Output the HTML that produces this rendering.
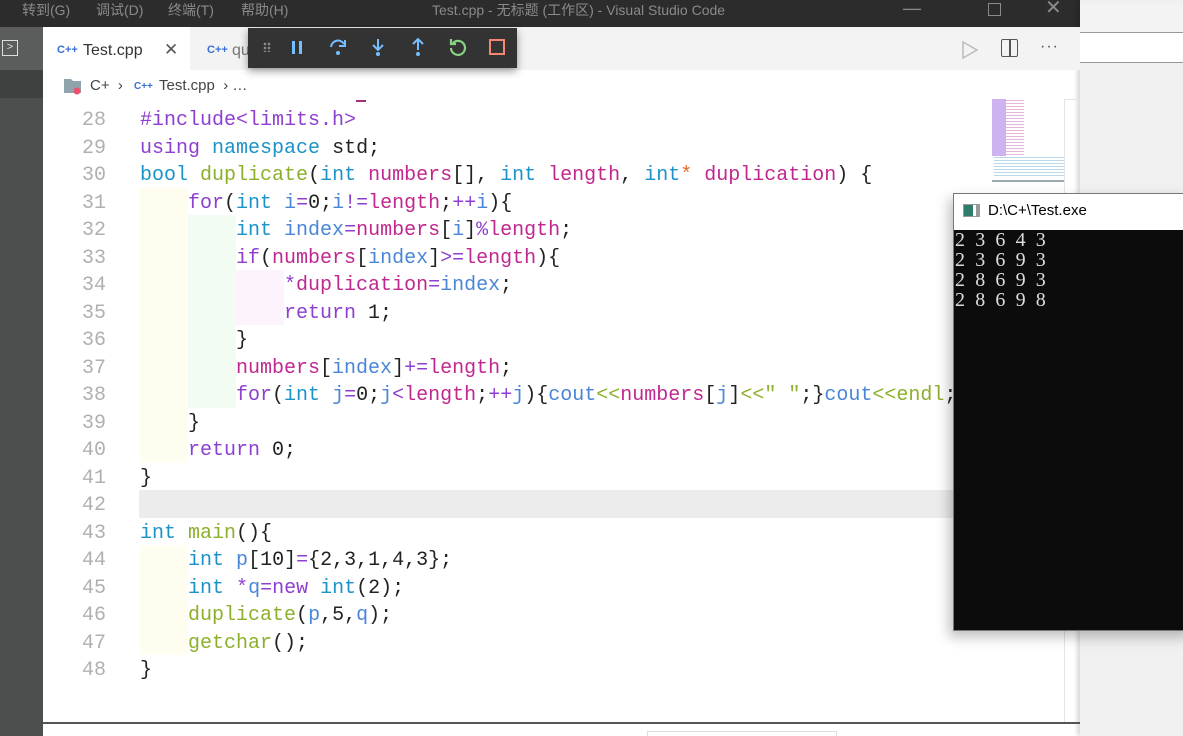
<!DOCTYPE html>
<html><head><meta charset="utf-8"><style>
*{margin:0;padding:0;box-sizing:border-box}
body{width:1183px;height:736px;overflow:hidden;position:relative;background:#fff;font-family:"Liberation Sans","Noto Sans CJK SC",sans-serif}
.abs{position:absolute}
.code{font-family:"Liberation Mono","DejaVu Sans Mono",monospace;font-size:20px;line-height:27.5px;white-space:pre}
.ln{color:#b0b0b0;text-align:right;width:64px;left:42px}
.p{color:#8d3fd0}.b{color:#1b93c8}.m{color:#c0278f}.g{color:#8cb02c}.k{color:#222}.o{color:#e26a2a}.lb{color:#4a86d8}
</style></head><body>
<div class="abs" style="left:0;top:0;width:1080px;height:27px;background:#2c2c2c"></div>
<div class="abs" style="left:0;top:0;width:1080px;height:27px;color:#8a8a8a;font-size:14px;line-height:20px">
<span class="abs" style="left:22px">转到(G)</span><span class="abs" style="left:96px">调试(D)</span><span class="abs" style="left:168px">终端(T)</span><span class="abs" style="left:241px">帮助(H)</span>
<span class="abs" style="left:432px">Test.cpp - 无标题 (工作区) - Visual Studio Code</span>
<span class="abs" style="left:903px;top:-2px;font-size:18px">—</span>
<span class="abs" style="left:988px;top:3px;width:13px;height:13px;border:1px solid #8a8a8a"></span>
<span class="abs" style="left:1045px;top:-2px;font-size:20px">✕</span>
</div>
<div class="abs" style="left:1080px;top:0;width:103px;height:736px;background:#f0f0f0;box-shadow:-3px 0 4px rgba(0,0,0,.15)"></div>
<div class="abs" style="left:1080px;top:4px;width:103px;height:28px;background:#f3f3f3"></div>
<div class="abs" style="left:1080px;top:32px;width:103px;height:31px;background:#fff;border-top:1px solid #999;border-bottom:1px solid #999"></div>
<div class="abs" style="left:0;top:27px;width:43px;height:709px;background:#4b4f4e"></div>
<div class="abs" style="left:0;top:27px;width:43px;height:43px;background:#5a5d5c"></div>
<div class="abs" style="left:2px;top:40px;width:16px;height:16px;border:1.5px solid #ddd;color:#ddd;font-size:11px;line-height:12px;text-align:center">&gt;</div>
<div class="abs" style="left:0;top:70px;width:43px;height:28px;background:#3d4140"></div>
<div class="abs" style="left:43px;top:27px;width:1037px;height:43px;background:#f3f3f3"></div>
<div class="abs" style="left:43px;top:27px;width:147px;height:43px;background:#fff"></div>
<div class="abs" style="left:57px;top:44px;font-size:11px;font-weight:bold;color:#3b6fd4">C++</div>
<div class="abs" style="left:83px;top:42px;font-size:16px;color:#333">Test.cpp</div>
<div class="abs" style="left:164px;top:40px;font-size:17px;color:#555">✕</div>
<div class="abs" style="left:207px;top:44px;font-size:11px;font-weight:bold;color:#3b6fd4">C++</div>
<div class="abs" style="left:232px;top:42px;font-size:16px;color:#777">qu</div>
<svg class="abs" style="left:960px;top:39px" width="20" height="22"><path d="M3 3 L17 11 L3 19Z" fill="none" stroke="#bbb" stroke-width="1.5"/></svg>
<div class="abs" style="left:1001px;top:39px;width:17px;height:18px;border:1.5px solid #555;border-radius:2px"></div>
<div class="abs" style="left:1009px;top:39px;width:1.5px;height:18px;background:#555"></div>
<div class="abs" style="left:1040px;top:38px;font-size:16px;color:#555;letter-spacing:1px">···</div>
<div class="abs" style="left:248px;top:28px;width:269px;height:40px;background:#333;box-shadow:0 3px 8px rgba(0,0,0,.4)"></div>
<div class="abs" style="left:263px;top:42px;width:8px;height:10px;background:radial-gradient(circle,#888 1.2px,transparent 1.5px) 0 0/4px 4px"></div>
<div class="abs" style="left:292px;top:41px;width:3px;height:13px;background:#75beff"></div>
<div class="abs" style="left:299px;top:41px;width:3px;height:13px;background:#75beff"></div>
<svg class="abs" style="left:327px;top:36px" width="22" height="22"><path d="M4 11 A7 7 0 0 1 17 8" fill="none" stroke="#75beff" stroke-width="2"/><path d="M18 4 L18 10 L12 10" fill="none" stroke="#75beff" stroke-width="2"/><circle cx="11" cy="17" r="2" fill="#75beff"/></svg>
<svg class="abs" style="left:367px;top:36px" width="22" height="22"><path d="M11 3 V13 M6 9 L11 14 L16 9" fill="none" stroke="#75beff" stroke-width="2"/><circle cx="11" cy="18" r="2" fill="#75beff"/></svg>
<svg class="abs" style="left:407px;top:36px" width="22" height="22"><path d="M11 14 V3 M6 8 L11 3 L16 8" fill="none" stroke="#75beff" stroke-width="2"/><circle cx="11" cy="18" r="2" fill="#75beff"/></svg>
<svg class="abs" style="left:447px;top:36px" width="22" height="22"><path d="M6 7 A7 7 0 1 1 4 12" fill="none" stroke="#89d185" stroke-width="2.2"/><path d="M4 3 V8 H9" fill="none" stroke="#89d185" stroke-width="2.2"/></svg>
<div class="abs" style="left:489px;top:39px;width:16px;height:16px;border:2px solid #f48771"></div>
<svg class="abs" style="left:63px;top:77px" width="22" height="18"><path d="M1 2 H8 L10 4 H18 V16 H1Z" fill="#90a4ae"/><circle cx="14" cy="14" r="3.5" fill="#f0506e"/></svg>
<div class="abs" style="left:90px;top:77px;font-size:15px;color:#444">C+ &nbsp;›</div>
<div class="abs" style="left:134px;top:81px;font-size:10px;font-weight:bold;color:#3b6fd4">C++</div>
<div class="abs" style="left:159px;top:77px;font-size:15px;color:#444">Test.cpp &nbsp;› …</div>
<div class="abs" style="left:356px;top:100px;width:10px;height:1.5px;background:#a0307a"></div>
<div class="abs" style="left:140px;top:187.5px;width:48px;height:275px;background:#fffdf0"></div>
<div class="abs" style="left:188px;top:215px;width:48px;height:192.5px;background:#f2fcf2"></div>
<div class="abs" style="left:236px;top:270px;width:48px;height:55px;background:#fdf3fc"></div>
<div class="abs" style="left:140px;top:545px;width:48px;height:110px;background:#fffdf0"></div>
<div class="abs" style="left:139px;top:490px;width:814px;height:27.5px;background:#ececec"></div>
<div class="abs code ln" style="top:107px">28
29
30
31
32
33
34
35
36
37
38
39
40
41
42
43
44
45
46
47
48</div>
<div class="abs code k" style="left:140px;top:107px"><span class="p">#include&lt;limits.h&gt;</span>
<span class="p">using</span> <span class="b">namespace</span> std;
<span class="b">bool</span> <span class="g">duplicate</span>(<span class="b">int</span> <span class="m">numbers</span>[], <span class="b">int</span> <span class="m">length</span>, <span class="b">int</span><span class="o">*</span> <span class="m">duplication</span>) {
    <span class="p">for</span>(<span class="b">int</span> <span class="lb">i</span><span class="p">=</span>0;<span class="lb">i</span><span class="p">!=</span><span class="m">length</span>;<span class="p">++</span><span class="lb">i</span>){
        <span class="b">int</span> <span class="lb">index</span><span class="p">=</span><span class="m">numbers</span>[<span class="lb">i</span>]<span class="p">%</span><span class="m">length</span>;
        <span class="p">if</span>(<span class="m">numbers</span>[<span class="lb">index</span>]<span class="p">&gt;=</span><span class="m">length</span>){
            <span class="p">*</span><span class="m">duplication</span><span class="p">=</span><span class="lb">index</span>;
            <span class="p">return</span> 1;
        }
        <span class="m">numbers</span>[<span class="lb">index</span>]<span class="p">+=</span><span class="m">length</span>;
        <span class="p">for</span>(<span class="b">int</span> <span class="lb">j</span><span class="p">=</span>0;<span class="lb">j</span><span class="p">&lt;</span><span class="m">length</span>;<span class="p">++</span><span class="lb">j</span>){<span class="lb">cout</span><span class="g">&lt;&lt;</span><span class="m">numbers</span>[<span class="lb">j</span>]<span class="g">&lt;&lt;</span><span class="g">" "</span>;}<span class="lb">cout</span><span class="g">&lt;&lt;</span><span class="g">endl</span>;
    }
    <span class="p">return</span> 0;
}

<span class="b">int</span> <span class="g">main</span>(){
    <span class="b">int</span> <span class="lb">p</span>[10]<span class="p">=</span>{2,3,1,4,3};
    <span class="b">int</span> <span class="p">*</span><span class="lb">q</span><span class="p">=new</span> <span class="b">int</span>(2);
    <span class="g">duplicate</span>(<span class="lb">p</span>,5,<span class="lb">q</span>);
    <span class="g">getchar</span>();
}</div>
<div class="abs" style="left:992px;top:99px;width:14px;height:57px;background:#cdb3f0"></div>
<div class="abs" style="left:1006px;top:100px;width:18px;height:55px;background:repeating-linear-gradient(#e6b6dc 0 1px,transparent 1px 3px)"></div>
<div class="abs" style="left:994px;top:157px;width:70px;height:20px;background:repeating-linear-gradient(#b8d8ec 0 1px,transparent 1px 3px)"></div>
<div class="abs" style="left:992px;top:180px;width:72px;height:2px;background:#9aa8b0"></div>
<div class="abs" style="left:1064px;top:99px;width:1px;height:624px;background:#e4e4e4"></div>
<div class="abs" style="left:1065px;top:99px;width:15px;height:1px;background:#e4e4e4"></div>
<div class="abs" style="left:43px;top:722px;width:1037px;height:2px;background:#555"></div>
<div class="abs" style="left:647px;top:731px;width:190px;height:5px;border:1px solid #ddd;border-bottom:none"></div>
<div class="abs" style="left:953px;top:193px;width:240px;height:438px;background:#0c0c0c;border:1px solid #777;box-shadow:-4px 6px 12px rgba(0,0,0,.25)"></div>
<div class="abs" style="left:954px;top:194px;width:229px;height:36px;background:#fff"></div>
<div class="abs" style="left:963px;top:204px;width:17px;height:13px;border:1px solid #999;background:linear-gradient(90deg,#2e7d6a 0 60%,#fff 60% 80%,#999 80%)"></div>
<div class="abs" style="left:988px;top:202px;font-size:15px;color:#000">D:\C+\Test.exe</div>
<div class="abs" style="left:955px;top:230px;font-family:'Liberation Serif',serif;font-size:20px;line-height:20px;color:#ddd;white-space:pre;letter-spacing:2.6px">2 3 6 4 3
2 3 6 9 3
2 8 6 9 3
2 8 6 9 8</div>
</body></html>
